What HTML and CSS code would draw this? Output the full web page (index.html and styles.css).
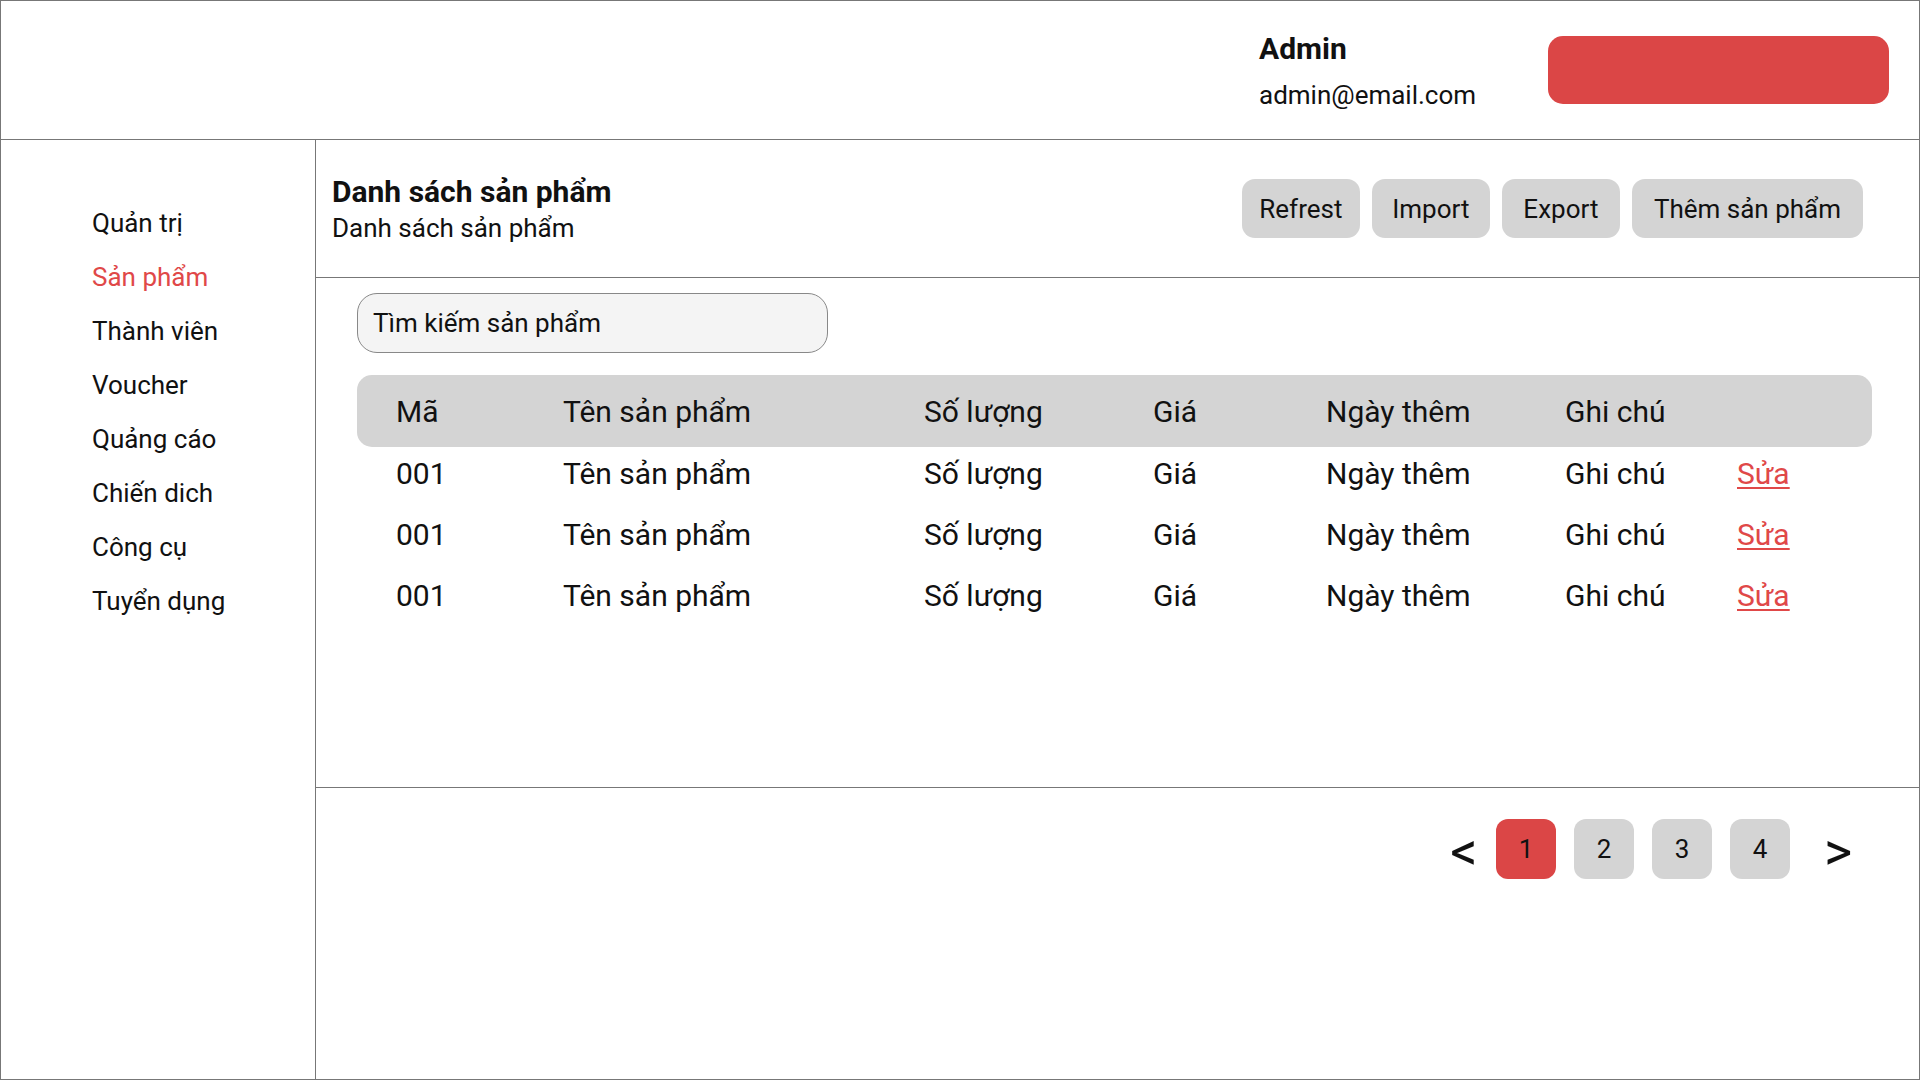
FILE: index.html
```html
<!DOCTYPE html>
<html lang="vi">
<head>
<meta charset="utf-8">
<title>Danh sách sản phẩm</title>
<link rel="stylesheet" href="styles.css">
</head>
<body>
<div class="app">
  <header class="topbar">
    <div class="user">
      <div class="user-name">Admin</div>
      <div class="user-email">admin@email.com</div>
    </div>
    <button class="logout" type="button" aria-label="Đăng xuất"></button>
  </header>
  <div class="layout">
    <nav class="sidebar">
      <a class="nav-item">Quản trị</a>
      <a class="nav-item active">Sản phẩm</a>
      <a class="nav-item">Thành viên</a>
      <a class="nav-item">Voucher</a>
      <a class="nav-item">Quảng cáo</a>
      <a class="nav-item">Chiến dich</a>
      <a class="nav-item">Công cụ</a>
      <a class="nav-item">Tuyển dụng</a>
    </nav>
    <main class="main">
      <section class="page-head">
        <div class="titles">
          <div class="title">Danh sách sản phẩm</div>
          <div class="subtitle">Danh sách sản phẩm</div>
        </div>
        <div class="actions">
          <button class="btn" type="button">Refrest</button>
          <button class="btn" type="button">Import</button>
          <button class="btn" type="button">Export</button>
          <button class="btn btn-wide" type="button">Thêm sản phẩm</button>
        </div>
      </section>
      <section class="page-body">
        <div class="search">Tìm kiếm sản phẩm</div>
        <div class="table">
          <div class="row head">
            <div>Mã</div><div>Tên sản phẩm</div><div>Số lượng</div><div>Giá</div><div>Ngày thêm</div><div>Ghi chú</div><div></div>
          </div>
          <div class="row">
            <div>001</div><div>Tên sản phẩm</div><div>Số lượng</div><div>Giá</div><div>Ngày thêm</div><div>Ghi chú</div><div><a class="edit">Sửa</a></div>
          </div>
          <div class="row">
            <div>001</div><div>Tên sản phẩm</div><div>Số lượng</div><div>Giá</div><div>Ngày thêm</div><div>Ghi chú</div><div><a class="edit">Sửa</a></div>
          </div>
          <div class="row">
            <div>001</div><div>Tên sản phẩm</div><div>Số lượng</div><div>Giá</div><div>Ngày thêm</div><div>Ghi chú</div><div><a class="edit">Sửa</a></div>
          </div>
        </div>
      </section>
      <section class="pager">
        <span class="pg-arrow prev">&lt;</span>
        <span class="pg-btn current">1</span>
        <span class="pg-btn">2</span>
        <span class="pg-btn">3</span>
        <span class="pg-btn">4</span>
        <span class="pg-arrow next">&gt;</span>
      </section>
    </main>
  </div>
</div>
</body>
</html>
```
FILE: styles.css
```css
* { box-sizing: border-box; }
html, body { margin: 0; padding: 0; }
body {
  font-family: Roboto, "Noto Sans", Arial, sans-serif;
  color: #111;
  background: #fff;
}
.app {
  width: 1920px;
  height: 1080px;
  border: 1px solid #777;
  display: flex;
  flex-direction: column;
  overflow: hidden;
}
.topbar {
  height: 139px;
  flex: none;
  border-bottom: 1px solid #777;
  display: flex;
  align-items: center;
  justify-content: flex-end;
  padding: 0 30px 0 0;
}
.user { width: 289px; }
.user-name {
  font-size: 30px;
  font-weight: 700;
  line-height: 36px;
}
.user-email {
  font-size: 26px;
  line-height: 30px;
  margin-top: 13px;
}
.logout {
  width: 341px;
  height: 68px;
  border: none;
  border-radius: 15px;
  background: #db4646;
  padding: 0;
}
.layout {
  flex: 1;
  display: flex;
  min-height: 0;
}
.sidebar {
  width: 315px;
  flex: none;
  border-right: 1px solid #777;
  padding: 56px 0 0 91px;
  display: flex;
  flex-direction: column;
}
.nav-item {
  font-size: 26px;
  line-height: 54px;
  color: #111;
}
.nav-item.active { color: #e04848; }
.main {
  flex: 1;
  display: flex;
  flex-direction: column;
}
.page-head {
  height: 138px;
  border-bottom: 1px solid #777;
  display: flex;
  align-items: center;
  justify-content: space-between;
  padding: 0 56px 0 16px;
}
.title {
  font-size: 30px;
  font-weight: 700;
  line-height: 36px;
}
.subtitle {
  font-size: 26px;
  line-height: 30px;
  margin-top: 3px;
}
.actions {
  display: flex;
  gap: 12px;
}
.btn {
  font-family: inherit;
  font-size: 26px;
  color: #111;
  height: 59px;
  min-width: 118px;
  padding: 0 17px;
  border: none;
  border-radius: 13px;
  background: #d4d4d4;
}
.btn-wide { padding: 0 22px; }
.page-body {
  height: 509px;
  padding: 15px 47px 0 41px;
}
.search {
  width: 471px;
  height: 60px;
  border: 1px solid #888;
  border-radius: 20px;
  background: #f4f4f4;
  font-size: 26px;
  line-height: 58px;
  padding-left: 15px;
}
.table { margin-top: 22px; }
.row {
  display: grid;
  grid-template-columns: 167px 361px 229px 173px 239px 172px 1fr;
  padding-left: 39px;
  font-size: 30px;
  line-height: 51px;
  margin-bottom: 10px;
}
.row.head {
  background: #d4d4d4;
  border-radius: 15px;
  line-height: 72px;
  margin-bottom: 0;
  padding-top: 1px;
  height: 72px;
}
.row:nth-child(2) { padding-top: 1px; }
.edit {
  color: #e04848;
  text-decoration: underline;
  text-decoration-thickness: 2px;
  text-underline-offset: 3px;
}
.pager {
  border-top: 1px solid #777;
  display: flex;
  justify-content: flex-end;
  align-items: flex-start;
  padding: 31px 61px 0 0;
  flex: 1;
}
.pg-btn {
  width: 60px;
  height: 60px;
  border-radius: 12px;
  background: #d4d4d4;
  font-size: 26px;
  line-height: 60px;
  text-align: center;
  margin-right: 18px;
}
.pg-btn.current { background: #db4646; }
.pg-btn:nth-last-child(2) { margin-right: 0; }
.pg-arrow {
  width: 40px;
  height: 60px;
  font-size: 54px;
  font-weight: 400;
  line-height: 66px;
  text-align: center;
}
.pg-arrow.prev { margin-right: 12px; }
.pg-arrow.next { margin-left: 28px; }
```
